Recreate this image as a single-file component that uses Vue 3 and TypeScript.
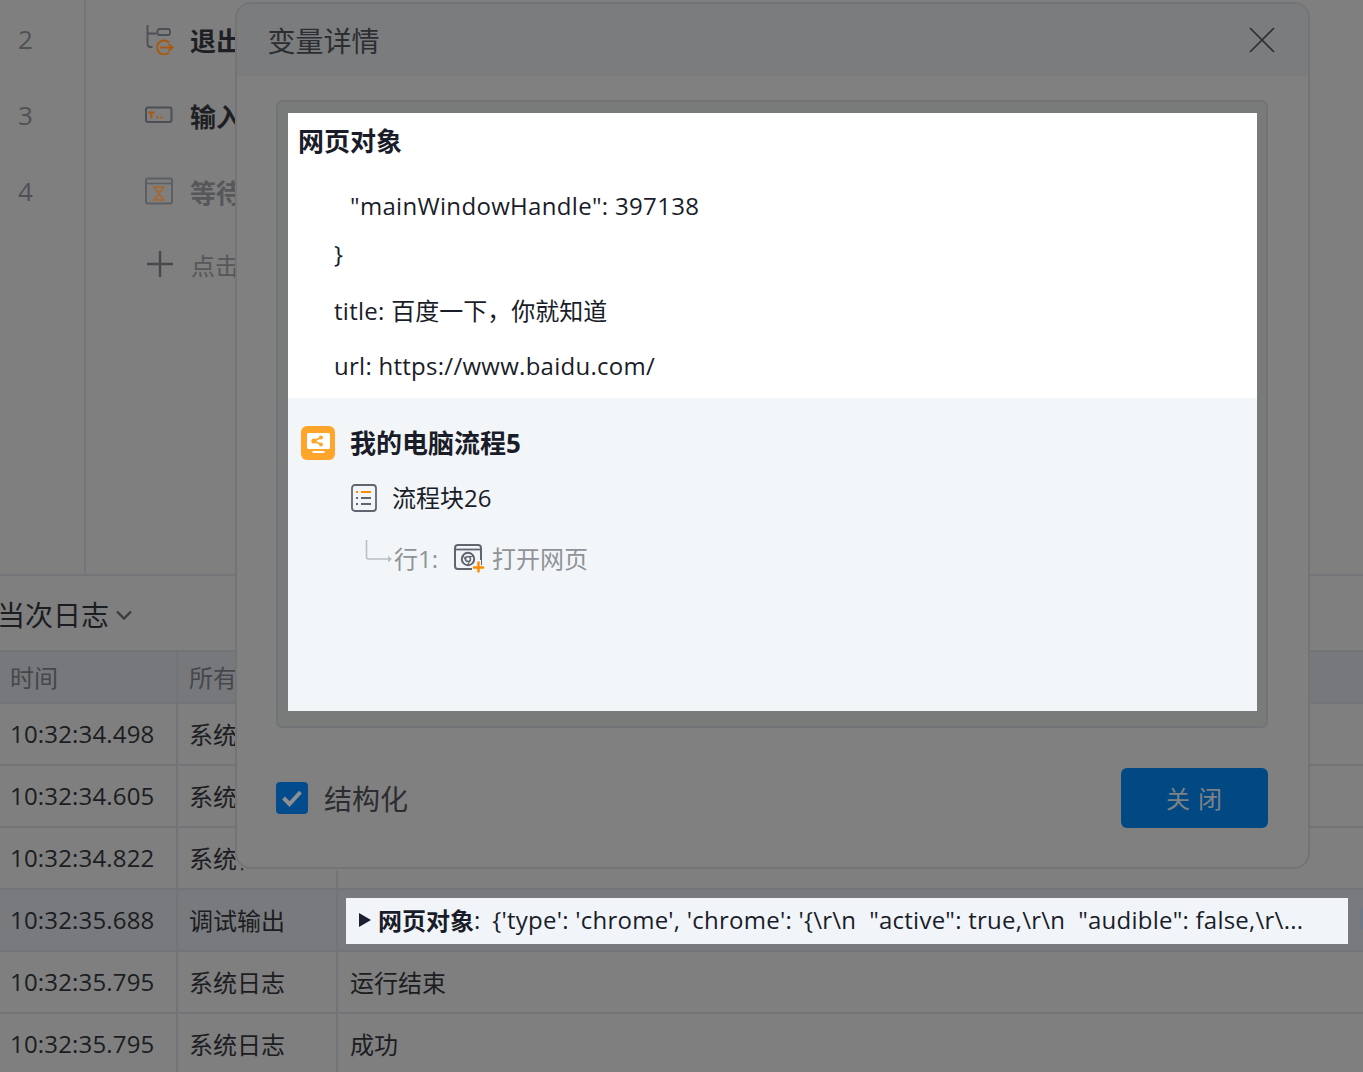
<script setup lang="ts">
interface LogRow {
  time: string
  owner: string
  message: string
}

const steps = [
  { no: 2, label: '退出循环', kind: 'exit', muted: false },
  { no: 3, label: '输入文本', kind: 'input', muted: false },
  { no: 4, label: '等待元素', kind: 'wait', muted: true },
]

const logs: LogRow[] = [
  { time: '10:32:34.498', owner: '系统日志', message: '开始运行' },
  { time: '10:32:34.605', owner: '系统日志', message: '正在运行' },
  { time: '10:32:34.822', owner: '系统日志', message: '打开网页' },
  { time: '10:32:35.688', owner: '调试输出', message: '' },
  { time: '10:32:35.795', owner: '系统日志', message: '运行结束' },
  { time: '10:32:35.795', owner: '系统日志', message: '成功' },
]
</script>

<template>
  <div class="page">
    <section class="editor">
      <div class="gutter">
        <div v-for="s in steps" :key="s.no" class="line-no">{{ s.no }}</div>
      </div>
      <div class="steps">
        <div v-for="s in steps" :key="s.no" class="step">
          <span class="step-icon">
            <svg v-if="s.kind === 'exit'" width="30" height="32" viewBox="0 0 30 32" fill="none">
              <path d="M2.500 2v19q0 3 3 3h2M2.500 10.500h9" stroke="#4c4f54" stroke-width="1.800" />
              <rect x="12.500" y="6" width="12.500" height="6" rx="2" stroke="#4c4f54" stroke-width="1.800" />
              <path d="M24 19.500a7 7 0 1 0 0 10" stroke="#a85a10" stroke-width="2" />
              <path d="M15 24.500h12M23.500 21l4 3.500-4 3.500" stroke="#a85a10" stroke-width="2" />
            </svg>
            <svg v-else-if="s.kind === 'input'" width="30" height="32" viewBox="0 0 30 32" fill="none">
              <rect x="1" y="8.500" width="25.500" height="14.500" rx="2" stroke="#4c4f54" stroke-width="2" />
              <path d="M3 13.500h6.500M6.300 13.500v6" stroke="#a85a10" stroke-width="2.200" />
              <path d="M11.500 18.500h2M15.500 18.500h2" stroke="#a85a10" stroke-width="2" />
            </svg>
            <svg v-else width="30" height="32" viewBox="0 0 30 32" fill="none">
              <rect x="1" y="3.500" width="26" height="25" rx="2" stroke="#5c5f63" stroke-width="2" />
              <path d="M1 8.500h26" stroke="#5c5f63" stroke-width="1.600" />
              <path d="M8 12h12M8 25h12M10 12c0 4 4 4 4 6.500 0 2.500-4 2.500-4 6.500M18 12c0 4-4 4-4 6.500 0 2.500 4 2.500 4 6.500" stroke="#a06a3c" stroke-width="2" />
            </svg>
          </span>
          <strong class="step-label" :class="{ muted: s.muted }">{{ s.label }}</strong>
        </div>
        <div class="add-step">
          <svg width="28" height="28" viewBox="0 0 28 28" fill="none">
            <path d="M14 1v26M1 14h26" stroke="#45494e" stroke-width="2.400" />
          </svg>
          <span>点击添加</span>
        </div>
      </div>
    </section>

    <section class="log">
      <header class="log-head">
        <span class="log-title">当次日志</span>
        <svg width="16" height="10" viewBox="0 0 16 10" fill="none">
          <path d="M1 1.500 8 8.500l7-7" stroke="#3a3c3f" stroke-width="2.400" />
        </svg>
      </header>
      <div class="table">
        <div class="tr th">
          <div class="td">时间</div>
          <div class="td">所有日志</div>
          <div class="td">内容</div>
        </div>
        <div v-for="(row, i) in logs" :key="i" class="tr" :class="{ active: i === 3 }">
          <div class="td time">{{ row.time }}</div>
          <div class="td">{{ row.owner }}</div>
          <div class="td">
            <template v-if="i === 3">
              <div class="spot">
                <i class="tri"></i>
                <b>网页对象</b><span class="colon">:</span>
                <span class="spot-text">{'type': 'chrome', 'chrome': '{\r\n&nbsp; "active": true,\r\n&nbsp; "audible": false,\r\...</span>
              </div>
              <i class="row-handle"></i>
            </template>
            <template v-else>{{ row.message }}</template>
          </div>
        </div>
      </div>
    </section>

    <div class="modal">
      <header class="modal-head">
        <h2>变量详情</h2>
        <svg width="26" height="26" viewBox="0 0 26 26" fill="none">
          <path d="M1 1l24 24M25 1 1 25" stroke="#2f3032" stroke-width="1.700" />
        </svg>
      </header>
      <div class="modal-body">
        <div class="viewer">
          <div class="var-pane">
            <div class="var-name">网页对象</div>
            <div class="json key">"mainWindowHandle": 397138</div>
            <div class="json brace">}</div>
            <div class="json field"><span class="latin">title: </span>百度一下，你就知道</div>
            <div class="json field"><span class="latin">url: https://www.baidu.com/</span></div>
          </div>
          <div class="source-pane">
            <div class="flow">
              <span class="flow-badge">
                <svg width="34" height="34" viewBox="0 0 34 34">
                  <rect width="34" height="34" rx="6" fill="#ffa52b" />
                  <rect x="6" y="7" width="23" height="16" rx="1.500" fill="#fff" />
                  <path d="M11.500 26h12" stroke="#fff" stroke-width="2" />
                  <path d="M20 11.500l-7 3.500 7 3.500" stroke="#ffa52b" stroke-width="1.600" fill="none" />
                  <circle cx="13" cy="15" r="2.600" fill="#ffa52b" />
                  <circle cx="20" cy="11.500" r="2" fill="#ffa52b" />
                  <circle cx="20" cy="18.500" r="2" fill="#ffa52b" />
                </svg>
              </span>
              <strong>我的电脑流程5</strong>
            </div>
            <div class="block">
              <svg width="26" height="28" viewBox="0 0 26 28" fill="none">
                <rect x="1" y="1" width="24" height="26" rx="3" stroke="#5f6670" stroke-width="1.800" />
                <path d="M5 8h2M10 8h10" stroke="#ff8a00" stroke-width="1.800" />
                <path d="M5 14h2M10 14h10M5 20h2M10 20h10" stroke="#5f6670" stroke-width="1.800" />
              </svg>
              <span>流程块26</span>
            </div>
            <div class="line-ref">
              <svg class="elbow" width="28" height="24" viewBox="0 0 28 24" fill="none">
                <path d="M1.500 0v17q0 2 2 2H25" stroke="#bcbfc3" stroke-width="1.600" />
                <path d="M23 15.500l4 3.500-4 3.500z" fill="#bcbfc3" />
              </svg>
              <span class="ref-no">行1:</span>
              <svg class="ref-icon" width="30" height="29" viewBox="0 0 30 29" fill="none">
                <rect x="1" y="1" width="26" height="24" rx="3" stroke="#5f6670" stroke-width="2" />
                <path d="M1 5.500h26" stroke="#5f6670" stroke-width="1.800" />
                <circle cx="14" cy="15" r="6.200" stroke="#5f6670" stroke-width="2" />
                <circle cx="14" cy="15" r="2.500" stroke="#5f6670" stroke-width="1.500" />
                <path d="M14 12.500h6M11.800 16.200 9 11.500M16.200 16.200 13.500 21" stroke="#5f6670" stroke-width="1.200" />
                <path d="M24.500 16v13M18 23.500h12" stroke="#f3f6f8" stroke-width="5" />
                <path d="M24.500 17.500v11M19 23.500h11" stroke="#ff8a00" stroke-width="2.400" />
              </svg>
              <span class="ref-name">打开网页</span>
            </div>
          </div>
        </div>
        <footer class="modal-foot">
          <label class="check">
            <span class="box">
              <svg width="22" height="18" viewBox="0 0 22 18" fill="none">
                <path d="M2.500 9l6 6 11-12" stroke="#8d8f91" stroke-width="4" />
              </svg>
            </span>
            <span>结构化</span>
          </label>
          <button class="close-btn" type="button">关 闭</button>
        </footer>
      </div>
    </div>
  </div>
</template>

<style>
html,
body {
  margin: 0;
  background: #7f7f7f;
}
</style>

<style scoped>
.page {
  position: relative;
  width: 1363px;
  height: 1072px;
  overflow: hidden;
  background: #7f7f7f;
  color: #1b1d22;
  font-family: "Open Sans", "Noto Sans CJK SC", sans-serif;
  font-size: 24px;
}
.editor {
  display: flex;
  height: 574px;
  border-bottom: 2px solid #747578;
}
.gutter {
  width: 84px;
  flex: none;
  border-right: 2px solid #757679;
  padding-top: 1px;
}
.line-no {
  height: 76px;
  line-height: 76px;
  padding-left: 18px;
  font-size: 26px;
  color: #505154;
}
.steps {
  padding: 1px 0 0 59px;
}
.step {
  display: flex;
  align-items: center;
  height: 76px;
  white-space: nowrap;
}
.step-icon {
  display: flex;
  width: 45px;
  flex: none;
}
.step-label {
  padding-top: 2px;
  font-size: 26px;
  font-weight: 700;
  color: #1d1f24;
}
.step-label.muted {
  color: #55575b;
}
.add-step {
  display: flex;
  align-items: center;
  gap: 17px;
  height: 70px;
  padding-left: 1px;
  color: #55575a;
  white-space: nowrap;
}
.log-head {
  display: flex;
  align-items: center;
  gap: 7px;
  height: 74px;
  padding-top: 2px;
  box-sizing: border-box;
  margin-left: -3px;
}
.log-title {
  font-size: 28px;
}
.log-head svg {
  margin-top: 2px;
}
.table {
  border-top: 2px solid #737478;
}
.tr {
  display: grid;
  grid-template-columns: 178px 160px 1fr;
  height: 62px;
  box-sizing: border-box;
  border-bottom: 2px solid #737478;
}
.tr.th {
  height: 52px;
  background: #76787b;
  color: #45474a;
}
.tr.active {
  background: #797a7d;
}
.td {
  display: flex;
  align-items: center;
  box-sizing: border-box;
  padding: 0 0 2px 11px;
  border-right: 2px solid #737478;
  white-space: nowrap;
  overflow: hidden;
}
.td:first-child {
  padding-left: 10px;
}
.td.time {
  letter-spacing: 0.17px;
}
.td:last-child {
  border-right: 0;
  padding-left: 12px;
}
.spot {
  display: flex;
  flex: none;
  align-items: center;
  box-sizing: border-box;
  width: 1002px;
  height: 46px;
  margin: 4px 0 0 -4px;
  padding: 0 0 3px 13px;
  background: #f1f5f9;
  color: #1a1d29;
}
.row-handle {
  flex: none;
  width: 10px;
  height: 22px;
  margin-left: 12px;
  border-radius: 3px;
  background: #6e7884;
}
.tri {
  width: 0;
  height: 0;
  margin-right: 7px;
  border-left: 12px solid #1b2030;
  border-top: 7px solid transparent;
  border-bottom: 7px solid transparent;
}
.spot b {
  font-weight: 700;
}
.colon {
  margin-right: 12px;
}
.spot-text {
  letter-spacing: 0.24px;
}
.modal {
  position: absolute;
  left: 235px;
  top: 2px;
  width: 1075px;
  height: 867px;
  box-sizing: border-box;
  border: 2px solid #737476;
  border-radius: 16px;
  background: #808080;
  box-shadow: 0 2px 0 #7f7f7f;
  overflow: hidden;
}
.modal-head {
  display: flex;
  align-items: center;
  justify-content: space-between;
  height: 72px;
  padding: 0 33px 0 30.5px;
  background: #7b7c7e;
}
.modal-head h2 {
  margin: 0;
  font-size: 28px;
  font-weight: 400;
  color: #2c2e32;
}
.modal-body {
  padding: 24px 40px 0 39px;
}
.viewer {
  box-sizing: border-box;
  height: 628px;
  padding: 11px 9px 15px 10px;
  border: 2px solid #717377;
  border-radius: 6px;
  background: #797b7b;
  color: #1a1d29;
}
.var-pane {
  height: 285px;
  background: #fff;
  overflow: hidden;
}
.var-name {
  height: 56px;
  padding-left: 10px;
  line-height: 56px;
  font-size: 26px;
  font-weight: 700;
}
.json {
  padding-left: 46px;
  white-space: nowrap;
}
.key {
  height: 50px;
  padding-left: 62px;
  line-height: 74px;
  letter-spacing: 0.32px;
}
.brace {
  height: 62px;
  line-height: 69px;
}
.field {
  height: 55px;
  line-height: 60px;
}
.latin {
  letter-spacing: 0.27px;
}
.source-pane {
  height: 313px;
  background: #f3f6f8;
  overflow: hidden;
}
.flow {
  display: flex;
  align-items: center;
  gap: 15px;
  height: 34px;
  margin-top: 28px;
  padding-left: 13px;
}
.flow-badge {
  display: flex;
}
.flow strong {
  font-size: 26px;
  font-weight: 700;
  line-height: 32px;
  margin-bottom: 1px;
}
.block {
  display: flex;
  align-items: center;
  gap: 15px;
  height: 30px;
  margin-top: 23px;
  padding-left: 63px;
}
.block span {
  margin-bottom: 3px;
}
.line-ref {
  display: flex;
  align-items: flex-end;
  height: 36px;
  margin-top: 24px;
  padding-left: 77px;
  color: #8f9398;
}
.elbow {
  margin-bottom: 9px;
}
.ref-no {
  margin-left: 1px;
  line-height: 34px;
  transform: translateY(3px);
}
.ref-icon {
  margin: 0 8px 0 16px;
}
.ref-name {
  line-height: 34px;
  transform: translateY(3px);
}
.modal-foot {
  display: flex;
  align-items: center;
  justify-content: space-between;
  height: 60px;
  margin-top: 40px;
}
.check {
  display: flex;
  align-items: center;
  gap: 16px;
  font-size: 28px;
  color: #2b2d30;
}
.box {
  display: flex;
  align-items: center;
  justify-content: center;
  width: 32px;
  height: 32px;
  border-radius: 4px;
  background: #024b8c;
}
.close-btn {
  width: 147px;
  height: 60px;
  padding: 0 0 2px;
  border: 0;
  border-radius: 6px;
  background: #024984;
  color: #7f8285;
  font-family: inherit;
  font-size: 24px;
  letter-spacing: 1px;
}
</style>
